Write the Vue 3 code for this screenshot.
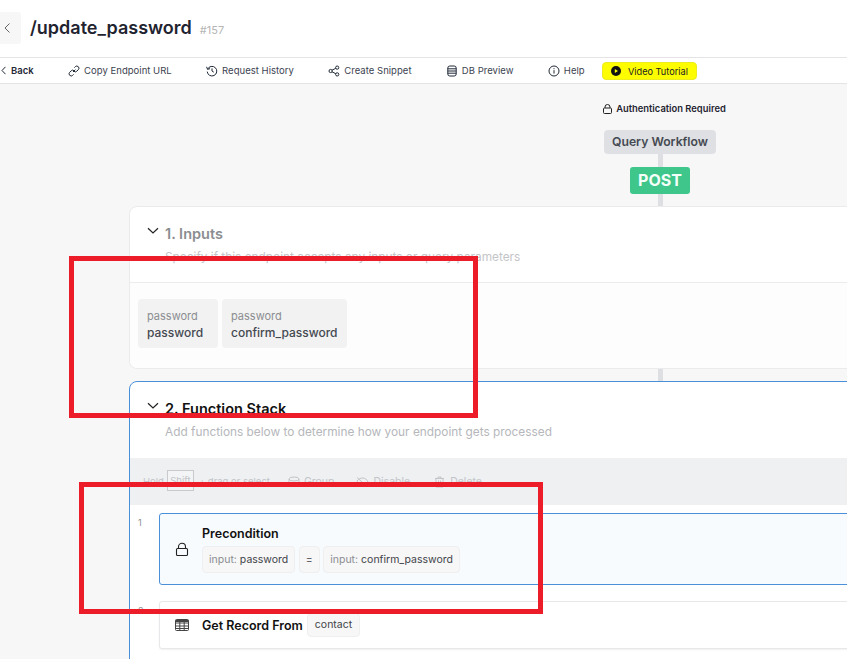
<script setup>
const tools = [
  { label: 'Copy Endpoint URL', icon: 'link' },
  { label: 'Request History', icon: 'history' },
  { label: 'Create Snippet', icon: 'share' },
  { label: 'DB Preview', icon: 'db' },
  { label: 'Help', icon: 'info' },
]
const inputs = [
  { type: 'password', name: 'password' },
  { type: 'password', name: 'confirm_password' },
]
</script>

<template>
  <div class="page">
    <header class="head">
      <button class="head-back">
        <svg width="8" height="12" viewBox="0 0 8 12"><path d="M6.500 1.500 2 6l4.500 4.500" fill="none" stroke="#666" stroke-width="1"/></svg>
      </button>
      <h1 class="title">/update_password</h1>
      <span class="id">#157</span>
    </header>

    <nav class="toolbar">
      <a class="tool back">
        <svg width="5" height="9" viewBox="0 0 5 9"><path d="M4.500.8 1 4.500l3.500 3.700" fill="none" stroke="#1f2937" stroke-width="1"/></svg>
        Back
      </a>
      <a v-for="t in tools" :key="t.label" class="tool">
        <svg width="12" height="12" viewBox="0 0 12 12" fill="none" stroke="#1f2937" stroke-width="1">
          <template v-if="t.icon === 'link'">
            <path d="M5 7l2.400-2.400"/>
            <path d="M6.400 2.600l.9-.9a2 2 0 0 1 3 3l-1.500 1.500a2 2 0 0 1-2.900 0"/>
            <path d="M5.600 9.400l-.9.9a2 2 0 0 1-3-3l1.500-1.500a2 2 0 0 1 2.900 0"/>
          </template>
          <template v-else-if="t.icon === 'history'">
            <path d="M1.600 4.200A4.800 4.800 0 1 1 1.200 6.600"/>
            <path d="M.6 1.800l.9 2.500 2.500-.6"/>
            <path d="M6 3.400V6l1.800 1.200"/>
          </template>
          <template v-else-if="t.icon === 'share'">
            <circle cx="2.600" cy="6" r="1.600"/>
            <circle cx="9.200" cy="2.600" r="1.600"/>
            <circle cx="9.200" cy="9.400" r="1.600"/>
            <path d="M4 5.200l3.800-1.900M4 6.800l3.800 1.900"/>
          </template>
          <template v-else-if="t.icon === 'db'">
            <rect x="1.800" y="1" width="8.400" height="10" rx="2"/>
            <path d="M1.800 3.800h8.400M1.800 6h8.400M1.800 8.200h8.400"/>
          </template>
          <template v-else>
            <circle cx="6" cy="6" r="5"/>
            <path d="M6 5.200v3.400M6 3.200v1"/>
          </template>
        </svg>
        {{ t.label }}
      </a>
      <a class="video">
        <svg width="10" height="10" viewBox="0 0 10 10"><circle cx="5" cy="5" r="5" fill="#111"/><path d="M3.800 2.900 7 5 3.800 7.100z" fill="#ff0"/></svg>
        Video Tutorial
      </a>
    </nav>

    <main class="canvas">
      <div class="auth">
        <svg width="9" height="10" viewBox="0 0 9 10" fill="none" stroke="#222" stroke-width="1"><rect x=".5" y="4" width="8" height="5.500" rx="1"/><path d="M2 4V3a2.500 2.500 0 0 1 5 0v1"/></svg>
        Authentication Required
      </div>
      <div class="workflow">Query Workflow</div>
      <div class="wire w13"></div>
      <div class="post">POST</div>
      <div class="wire w12"></div>

      <section class="card">
        <div class="card-head">
          <div class="card-title">
            <svg width="12" height="8" viewBox="0 0 12 8"><path d="M1 1.200 6 6l5-4.800" fill="none" stroke="#222" stroke-width="1.200"/></svg>
            <span class="name">1. Inputs</span>
          </div>
          <p class="desc">Specify if this endpoint accepts any inputs or query parameters</p>
        </div>
        <div class="inputs">
          <div v-for="i in inputs" :key="i.name" class="input-chip">
            <span class="input-type">{{ i.type }}</span>
            <span class="input-name">{{ i.name }}</span>
          </div>
        </div>
      </section>

      <div class="wire w12b"></div>

      <section class="card active">
        <div class="card-head stack-head">
          <div class="card-title">
            <svg width="12" height="8" viewBox="0 0 12 8"><path d="M1 1.200 6 6l5-4.800" fill="none" stroke="#222" stroke-width="1.200"/></svg>
            <span class="name dark">2. Function Stack</span>
          </div>
          <p class="desc">Add functions below to determine how your endpoint gets processed</p>
        </div>

        <div class="bar">
          <span class="hold">Hold</span><kbd class="kbd">Shift</kbd><span class="hold">+ drag or select</span>
          <span class="bar-action first">
            <svg width="12" height="12" viewBox="0 0 12 12" fill="none" stroke="#c2c4c8"><ellipse cx="6" cy="3" rx="5" ry="2"/><path d="M1 3v4c0 1.100 2.200 2 5 2s5-.9 5-2V3"/></svg>
            Group
          </span>
          <span class="bar-action second">
            <svg width="13" height="12" viewBox="0 0 13 12" fill="none" stroke="#c2c4c8"><path d="M1 1.500l10 9M1 5c2-2.500 4-3 6-3s4 1.500 5 4c-1 2.500-3 4-5 4S2 8 1 5z"/></svg>
            Disable
          </span>
          <span class="bar-action third">
            <svg width="11" height="12" viewBox="0 0 11 12" fill="none" stroke="#c2c4c8"><path d="M1 2.500h9M4 2.500V1h3v1.500M2 2.500V11h7V2.500M4.500 4.500V9M6.500 4.500V9"/></svg>
            Delete
          </span>
        </div>

        <div class="fn-row first-row">
          <span class="num">1</span>
          <div class="fn selected">
            <svg class="fn-icon" width="14" height="15" viewBox="0 0 14 15" fill="none" stroke="#222" stroke-width="1.100"><rect x="1.500" y="6.500" width="11" height="7" rx="1"/><path d="M3.500 6.500V4.800a3.500 3.500 0 0 1 7 0v1.700"/></svg>
            <div class="fn-body">
              <div class="fn-title">Precondition</div>
              <div class="chips">
                <span class="chip"><i>input:</i> password</span>
                <span class="chip">=</span>
                <span class="chip"><i>input:</i> confirm_password</span>
              </div>
            </div>
          </div>
        </div>

        <div class="fn-row">
          <span class="num">2</span>
          <div class="fn plain">
            <svg class="fn-icon" width="14" height="12" viewBox="0 0 14 12" fill="none" stroke="#444" stroke-width="1"><rect x=".5" y=".5" width="13" height="11" rx="1"/><path d="M.5 4h13M.5 7h13M.5 9.500h13M4.800 .5v11M9.200 .5v11"/><path d="M.5 2h13" stroke-width="2"/></svg>
            <div class="fn-title">Get Record From</div>
            <span class="chip contact">contact</span>
          </div>
        </div>
      </section>
    </main>

    <div class="mark mark-a"></div>
    <div class="mark mark-b"></div>
  </div>
</template>

<style scoped>
.page {
  position: relative;
  width: 847px;
  height: 659px;
  overflow: hidden;
  background: #f7f7f8;
  font-family: Inter, "Liberation Sans", sans-serif;
  color: #1f2937;
}
.head {
  height: 57px;
  background: #fff;
  display: flex;
  align-items: center;
  padding-bottom: 1px;
  box-sizing: border-box;
}
.head-back {
  width: 21px;
  height: 32px;
  border: 0;
  border-radius: 0 3px 3px 0;
  background: #f7f7f7;
  display: flex;
  align-items: center;
  padding: 0 0 0 3px;
}
.title {
  margin: 0 0 0 9px;
  font-size: 18px;
  line-height: 22px;
  font-weight: 600;
  color: #1f2430;
}
.id {
  margin: 3px 0 0 8px;
  font-size: 11px;
  color: #b5b5b5;
}
.toolbar {
  height: 27px;
  box-sizing: border-box;
  background: #fff;
  border-top: 1px solid #e4e4e6;
  border-bottom: 1px solid #e4e4e6;
  display: flex;
  align-items: center;
  gap: 34.300px;
}
.tool {
  display: flex;
  align-items: center;
  gap: 4px;
  font-size: 9.500px;
  letter-spacing: .03px;
  color: #3b4350;
  white-space: nowrap;
}
.back {
  gap: 5px;
  padding-left: 1px;
  font-weight: 600;
  color: #1f2937;
}
.video {
  margin-left: -17px;
  width: 95px;
  height: 18px;
  box-sizing: border-box;
  padding: 1px 0 0 8px;
  display: flex;
  align-items: center;
  gap: 7px;
  background: #fdfd00;
  border: 1px solid #ecec20;
  border-radius: 4px;
  font-size: 9.200px;
  color: #222;
  white-space: nowrap;
}
.canvas {
  width: 1062px;
  margin-left: 129px;
  display: flex;
  flex-direction: column;
  align-items: center;
}
.auth {
  margin-top: 18px;
  padding-left: 9px;
  height: 13px;
  display: flex;
  align-items: center;
  gap: 4px;
  font-size: 9.400px;
  font-weight: 600;
  color: #1f2430;
}
.workflow {
  margin-top: 15px;
  width: 112px;
  height: 24px;
  box-sizing: border-box;
  padding-bottom: 2px;
  background: #dfe0e3;
  border-radius: 4px;
  color: #454a52;
  font-size: 12.200px;
  font-weight: 600;
  display: flex;
  align-items: center;
  justify-content: center;
}
.wire {
  width: 5px;
  background: #dedfe2;
}
.w13 { height: 13px; }
.w12 { height: 12px; }
.w12b { height: 12px; }
.post {
  width: 60px;
  height: 27px;
  box-sizing: border-box;
  padding-bottom: 2px;
  background: #3fc68a;
  border-radius: 3px;
  color: #f4fff9;
  font-size: 16px;
  font-weight: 700;
  display: flex;
  align-items: center;
  justify-content: center;
}
.card {
  width: 100%;
  box-sizing: border-box;
  background: #fff;
  border: 1px solid #ebebed;
  border-radius: 8px;
}
.card.active {
  border-color: #4a90d9;
  height: 400px;
}
.card-head {
  height: 76px;
  box-sizing: border-box;
  padding: 17px 0 0 17px;
  border-bottom: 1px solid #ececee;
}
.stack-head {
  border-bottom: 0;
}
.card-title {
  display: flex;
  align-items: center;
  gap: 6px;
  height: 18px;
}
.card-title svg { margin-top: -5px; }
.name {
  font-size: 14.500px;
  font-weight: 600;
  color: #8b8d91;
}
.name.dark { color: #111; }
.desc {
  margin: 7px 0 0 18px;
  font-size: 11.850px;
  line-height: 16px;
  color: #c4c5c8;
}
.stack-head .desc { color: #b5b7bb; }
.inputs {
  height: 85px;
  box-sizing: border-box;
  padding: 16px 0 0 8px;
  display: flex;
  align-items: flex-start;
  gap: 4px;
  background: #fdfdfd;
  border-radius: 0 0 8px 8px;
}
.input-chip {
  min-width: 80px;
  height: 49px;
  box-sizing: border-box;
  padding: 9px 9px 0;
  background: #f2f2f2;
  border-radius: 4px;
  display: flex;
  flex-direction: column;
}
.input-type {
  font-size: 11px;
  line-height: 16px;
  color: #8b8d91;
}
.input-name {
  font-size: 12px;
  line-height: 17px;
  font-weight: 500;
  color: #444850;
}
.bar {
  height: 47px;
  padding-left: 13px;
  background: #eef0f2;
  display: flex;
  align-items: center;
  font-size: 10.500px;
  color: #c2c4c8;
  white-space: nowrap;
}
.hold { font-size: 9.500px; }
.kbd {
  width: 27px;
  height: 21px;
  box-sizing: border-box;
  margin: -2px 5px 0 3px;
  border: 1px solid #c8cacd;
  background: #f3f4f5;
  font-family: inherit;
  font-size: 9.500px;
  text-align: center;
  line-height: 19px;
}
.bar-action {
  display: flex;
  align-items: center;
  gap: 4px;
}
.bar-action.first { margin-left: 18px; }
.bar-action.second { margin-left: 22px; }
.bar-action.third { margin-left: 24px; gap: 5px; }
.fn-row {
  display: flex;
  align-items: flex-start;
  margin-top: 16px;
  padding-left: 8px;
}
.first-row { margin-top: 8px; }
.num {
  width: 21px;
  margin-top: 4px;
  font-size: 9px;
  line-height: 12px;
  color: #8b8d91;
}
.fn {
  flex: 1;
  box-sizing: border-box;
  display: flex;
  align-items: center;
  border-radius: 3px;
  background: #fff;
}
.fn.selected {
  height: 72px;
  padding-left: 15px;
  background: #f8fbfe;
  border: 1px solid #4a90d9;
}
.fn.plain {
  height: 48px;
  padding-left: 15px;
  border: 1px solid #e8e8ea;
  box-shadow: 0 1px 2px rgba(0, 0, 0, .06);
}
.fn-icon { flex: none; }
.fn-body { margin-left: 13px; }
.plain .fn-title { margin: 1px 0 0 13px; }
.fn-title {
  font-size: 12.500px;
  line-height: 16px;
  font-weight: 600;
  color: #111;
}
.chips {
  display: flex;
  gap: 3.500px;
  margin-top: 4px;
}
.chip {
  height: 27px;
  box-sizing: border-box;
  padding: 0 6px;
  display: flex;
  align-items: center;
  gap: 3px;
  background: #f7f7f7;
  border: 1px solid #efeff0;
  border-radius: 4px;
  font-size: 10.500px;
  color: #3f4349;
  white-space: nowrap;
}
.chip i {
  font-style: normal;
  color: #8b8d91;
}
.contact {
  height: 24px;
  padding: 0 7px;
  margin-left: 4px;
  margin-top: -1px;
}
.mark {
  position: absolute;
  box-sizing: border-box;
  border: 5px solid #ec1c28;
}
.mark-a {
  left: 69px;
  top: 256px;
  width: 409px;
  height: 162px;
}
.mark-b {
  left: 79px;
  top: 482px;
  width: 464px;
  height: 132px;
}
</style>

<style>
html, body { margin: 0; overflow: hidden; }
</style>
